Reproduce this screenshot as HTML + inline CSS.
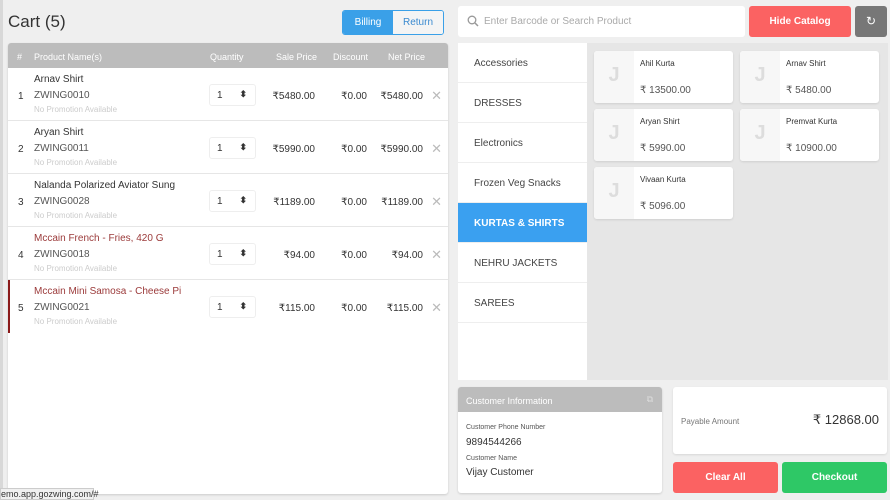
<!DOCTYPE html>
<html><head><meta charset="utf-8"><style>
*{box-sizing:border-box;margin:0;padding:0}
body{width:890px;height:500px;background:#efefef;font-family:"Liberation Sans",sans-serif;position:relative;overflow:hidden;color:#333}
.a{position:absolute}
.title{left:8px;top:12px;font-size:17px;color:#333}
.tog{left:342px;top:10px;width:102px;height:25px;border:1px solid #3aa0e8;border-radius:3px;display:flex;font-size:10px;overflow:hidden}
.tog div{flex:1;display:flex;align-items:center;justify-content:center}
.tbl{left:8px;top:43px;width:440px;height:451px;background:#fff;border-radius:3px;box-shadow:0 1px 2px rgba(0,0,0,.15);overflow:hidden}
.hd{height:25px;background:#bcbcbc;color:#fff;font-size:9px;position:relative}
.hd span,.row span{position:absolute}
.row{height:53px;border-bottom:1px solid #e6e6e6;position:relative;font-size:10px}
.qty{left:201px;top:16px;width:47px;height:22px;border:1px solid #eee;border-radius:3px;padding:5px 0 0 7px}
.x{color:#bbb;font-size:13px}
.search{left:458px;top:6px;width:287px;height:31px;background:#fff;border-radius:3px;font-size:10px;color:#aaa;padding:10px 0 0 26px}
.cats{left:458px;top:43px;width:129px;height:337px;background:#fff}
.cat{height:40px;border-bottom:1px solid #eee;font-size:10px;padding:15px 0 0 16px;color:#444}
.prods{left:587px;top:43px;width:301px;height:337px;background:#e6e6e6}
.card{width:139px;height:52px;background:#fff;border-radius:3px;box-shadow:0 1px 2px rgba(0,0,0,.1)}
.card .im{position:absolute;left:0;top:0;width:40px;height:52px;background:#f7f7f7;border-radius:3px 0 0 3px;color:#ddd;font-size:20px;font-weight:bold;text-align:center;padding-top:13px}
.card .n{position:absolute;left:46px;top:8px;font-size:8px;color:#333}
.card .p{position:absolute;left:46px;top:34px;font-size:10px;color:#555}
</style></head><body>
<div class="a" style="left:0;top:0;width:3px;height:500px;background:#d8d8d8"></div>
<div class="a title">Cart (5)</div>
<div class="a tog"><div style="background:#3aa0e8;color:#fff">Billing</div><div style="background:#f4f4f4;color:#3a8ad0">Return</div></div>
<div class="a tbl">
<div class="hd"><span style="left:9px;top:9px">#</span><span style="left:26px;top:9px">Product Name(s)</span><span style="left:202px;top:9px">Quantity</span><span style="left:268px;top:9px">Sale Price</span><span style="left:325px;top:9px">Discount</span><span style="left:380px;top:9px">Net Price</span></div>
<div class="row"><span style="left:10px;top:23px">1</span><span style="left:26px;top:6px">Arnav Shirt</span><span style="left:26px;top:22px;color:#555">ZWING0010</span><span style="left:26px;top:37px;color:#ccc;font-size:8px">No Promotion Available</span><span class="qty">1<b style="position:absolute;right:8px;top:4px;font-size:9px">⬍</b></span><span style="right:133px;top:23px">₹5480.00</span><span style="right:81px;top:23px">₹0.00</span><span style="right:25px;top:23px">₹5480.00</span><span class="x" style="right:6px;top:20px">✕</span></div>
<div class="row"><span style="left:10px;top:23px">2</span><span style="left:26px;top:6px">Aryan Shirt</span><span style="left:26px;top:22px;color:#555">ZWING0011</span><span style="left:26px;top:37px;color:#ccc;font-size:8px">No Promotion Available</span><span class="qty">1<b style="position:absolute;right:8px;top:4px;font-size:9px">⬍</b></span><span style="right:133px;top:23px">₹5990.00</span><span style="right:81px;top:23px">₹0.00</span><span style="right:25px;top:23px">₹5990.00</span><span class="x" style="right:6px;top:20px">✕</span></div>
<div class="row"><span style="left:10px;top:23px">3</span><span style="left:26px;top:6px">Nalanda Polarized Aviator Sung</span><span style="left:26px;top:22px;color:#555">ZWING0028</span><span style="left:26px;top:37px;color:#ccc;font-size:8px">No Promotion Available</span><span class="qty">1<b style="position:absolute;right:8px;top:4px;font-size:9px">⬍</b></span><span style="right:133px;top:23px">₹1189.00</span><span style="right:81px;top:23px">₹0.00</span><span style="right:25px;top:23px">₹1189.00</span><span class="x" style="right:6px;top:20px">✕</span></div>
<div class="row"><span style="left:10px;top:23px">4</span><span style="left:26px;top:6px;color:#9b3a3a">Mccain French - Fries, 420 G</span><span style="left:26px;top:22px;color:#555">ZWING0018</span><span style="left:26px;top:37px;color:#ccc;font-size:8px">No Promotion Available</span><span class="qty">1<b style="position:absolute;right:8px;top:4px;font-size:9px">⬍</b></span><span style="right:133px;top:23px">₹94.00</span><span style="right:81px;top:23px">₹0.00</span><span style="right:25px;top:23px">₹94.00</span><span class="x" style="right:6px;top:20px">✕</span></div>
<div class="row" style="border-bottom:none;border-left:2px solid #8b1a1a"><span style="left:8px;top:23px">5</span><span style="left:24px;top:6px;color:#9b3a3a">Mccain Mini Samosa - Cheese Pi</span><span style="left:24px;top:22px;color:#555">ZWING0021</span><span style="left:24px;top:37px;color:#ccc;font-size:8px">No Promotion Available</span><span class="qty" style="left:199px">1<b style="position:absolute;right:8px;top:4px;font-size:9px">⬍</b></span><span style="right:133px;top:23px">₹115.00</span><span style="right:81px;top:23px">₹0.00</span><span style="right:25px;top:23px">₹115.00</span><span class="x" style="right:6px;top:20px">✕</span></div>
</div>
<div class="a" style="left:0;top:488px;width:94px;height:12px;background:#f0f0f0;border:1px solid #ccc;font-size:9px;color:#333;padding-left:0">emo.app.gozwing.com/#</div>
<div class="a search"><svg class="a" style="left:9px;top:9px" width="12" height="12" viewBox="0 0 12 12"><circle cx="5" cy="5" r="3.8" fill="none" stroke="#999" stroke-width="1.3"/><path d="M8 8l3 3" stroke="#999" stroke-width="1.5"/></svg>Enter Barcode or Search Product</div>
<div class="a" style="left:749px;top:6px;width:102px;height:31px;background:#fb6262;border-radius:3px;color:#fff;font-size:10px;text-align:center;line-height:31px;font-weight:bold">Hide Catalog</div>
<div class="a" style="left:855px;top:6px;width:32px;height:31px;background:#777;border-radius:3px;color:#fff;font-size:12px;text-align:center;line-height:31px">↻</div>
<div class="a cats"><div class="cat">Accessories</div><div class="cat">DRESSES</div><div class="cat">Electronics</div><div class="cat">Frozen Veg Snacks</div><div class="cat" style="background:#3aa0f0;color:#fff;font-weight:bold">KURTAS &amp; SHIRTS</div><div class="cat">NEHRU JACKETS</div><div class="cat">SAREES</div></div>
<div class="a prods"></div>
<div class="a card" style="left:594px;top:51px"><div class="im">Ј</div><div class="n">Ahil Kurta</div><div class="p">₹ 13500.00</div></div>
<div class="a card" style="left:740px;top:51px"><div class="im">Ј</div><div class="n">Arnav Shirt</div><div class="p">₹ 5480.00</div></div>
<div class="a card" style="left:594px;top:109px"><div class="im">Ј</div><div class="n">Aryan Shirt</div><div class="p">₹ 5990.00</div></div>
<div class="a card" style="left:740px;top:109px"><div class="im">Ј</div><div class="n">Premvat Kurta</div><div class="p">₹ 10900.00</div></div>
<div class="a card" style="left:594px;top:167px"><div class="im">Ј</div><div class="n">Vivaan Kurta</div><div class="p">₹ 5096.00</div></div>
<div class="a" style="left:458px;top:387px;width:204px;height:106px;background:#fff;border-radius:3px;box-shadow:0 1px 2px rgba(0,0,0,.15);overflow:hidden">
<div style="height:25px;background:#bcbcbc;color:#fff;font-size:9px;padding:9px 0 0 8px">Customer Information<span style="position:absolute;right:9px;top:7px;font-size:9px;color:#ddd">⧉</span></div>
<div style="position:absolute;left:8px;top:37px;font-size:7px;color:#555">Customer Phone Number</div>
<div style="position:absolute;left:8px;top:50px;font-size:10px">9894544266</div>
<div style="position:absolute;left:8px;top:68px;font-size:7px;color:#555">Customer Name</div>
<div style="position:absolute;left:8px;top:80px;font-size:10px">Vijay Customer</div>
</div>
<div class="a" style="left:673px;top:387px;width:214px;height:67px;background:#fff;border-radius:3px;box-shadow:0 1px 2px rgba(0,0,0,.1)">
<div style="position:absolute;left:8px;top:30px;font-size:8px;color:#777">Payable Amount</div>
<div style="position:absolute;right:8px;top:25px;font-size:13px">₹ 12868.00</div></div>
<div class="a" style="left:673px;top:462px;width:105px;height:31px;background:#fb6262;border-radius:3px;color:#fff;font-size:10px;text-align:center;line-height:31px;font-weight:bold">Clear All</div>
<div class="a" style="left:782px;top:462px;width:105px;height:31px;background:#2ec866;border-radius:3px;color:#fff;font-size:10px;text-align:center;line-height:31px;font-weight:bold">Checkout</div>
</body></html>
